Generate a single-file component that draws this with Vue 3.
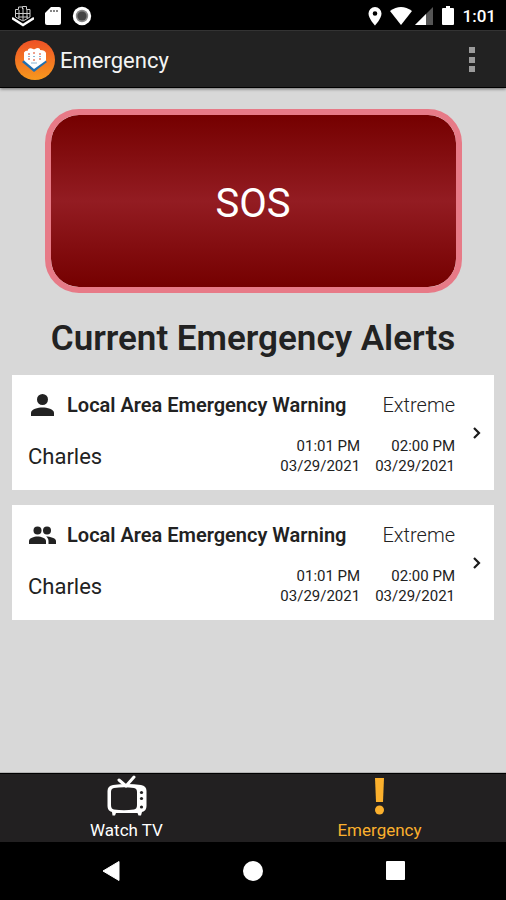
<script setup>
const alerts = [
  { id: 1, group: false, title: 'Local Area Emergency Warning', severity: 'Extreme', sender: 'Charles', start: ['01:01 PM', '03/29/2021'], end: ['02:00 PM', '03/29/2021'] },
  { id: 2, group: true, title: 'Local Area Emergency Warning', severity: 'Extreme', sender: 'Charles', start: ['01:01 PM', '03/29/2021'], end: ['02:00 PM', '03/29/2021'] },
]
</script>

<template>
  <div class="screen">
    <div class="status">
      <div class="status-left">
        <svg width="22" height="22" viewBox="0 0 22 22">
          <path d="M0 13l11 7 11-7" fill="none" stroke="#fff" stroke-width="2.400" />
          <g fill="none" stroke="#ccc" stroke-width="1">
            <path d="M3.500 12V4.500h3V2h4v2-2.500h4v3h3.500V12L11 16z" />
            <path d="M7 5v8M11 3v12M15 5v8M4 8.500h14M6 12h10" />
          </g>
        </svg>
        <svg width="16" height="20" viewBox="0 0 16 20">
          <path d="M6 1h8q2 0 2 2v14q0 2-2 2H2q-2 0-2-2V7z" fill="#fff" />
          <path d="M6 4v2M9 4v2M12 4v2" stroke="#444" stroke-width="1.300" />
        </svg>
        <svg width="20" height="20" viewBox="0 0 20 20">
          <circle cx="10" cy="10" r="9.200" fill="#fff" />
          <circle cx="10" cy="10" r="6.200" fill="#888" />
          <circle cx="10" cy="10" r="4.600" fill="#444" />
        </svg>
      </div>
      <div class="status-right">
        <svg class="pin" width="14" height="20" viewBox="0 0 14 20">
          <path fill-rule="evenodd" d="M7 1a6.500 6.500 0 0 1 6.500 6.500c0 5-6.500 12-6.500 12S.5 12.500.5 7.500A6.500 6.500 0 0 1 7 1zm0 4.200a2.300 2.300 0 1 0 0 4.600 2.300 2.300 0 0 0 0-4.600z" fill="#fff" />
        </svg>
        <svg class="wifi" width="22" height="18" viewBox="0 0 22 18">
          <path d="M0 4Q11-4 22 4L11 18z" fill="#fff" />
        </svg>
        <svg class="signal" width="18" height="18" viewBox="0 0 18 18">
          <path d="M18 0v18H0z" fill="#555" />
          <path d="M11 7v11H0z" fill="#fff" />
        </svg>
        <svg class="battery" width="12" height="20" viewBox="0 0 12 20">
          <path d="M4 0h4v2h3q1 0 1 1v15q0 1-1 1H1q-1 0-1-1V3q0-1 1-1h3z" fill="#fff" />
        </svg>
        <span>1:01</span>
      </div>
    </div>

    <header class="appbar">
      <svg class="logo" width="42" height="42" viewBox="0 0 42 42">
        <defs>
          <linearGradient id="sun" x1="0" y1="0" x2="0" y2="1">
            <stop offset="0" stop-color="#ef5126" />
            <stop offset="1" stop-color="#f7981d" />
          </linearGradient>
        </defs>
        <circle cx="21" cy="21" r="20" fill="url(#sun)" />
        <path d="M8 23l5-4h15l5 4-13 10z" fill="#1f6fb0" />
        <path d="M10 21.500l5-3h12l5 3L20 30z" fill="#fff" />
        <path d="M10 21V13.500q1-2 4-2V10.500q2-2 5-.5 1 .5 2 0 3-2 5 0v1q5 0 6 3v7L21 26z" fill="#fff" />
        <path d="M14 15h2m3-1h2m4 1h2M14 20h2m3 1h2m4-1h2" stroke="#e98168" stroke-width="1.500" />
        <path d="M14 17.500h2m3 0h2m4 0h2M17 24h6" stroke="#87b5d4" stroke-width="1.200" />
      </svg>
      <h1>Emergency</h1>
      <button class="more" type="button" aria-label="More options">
        <svg width="8" height="28" viewBox="0 0 8 28" fill="#9b9b9b">
          <path d="M1 1h6v6H1zM1 11h6v6H1zM1 20h6v6H1z" />
        </svg>
      </button>
    </header>

    <main>
      <button class="sos" type="button">SOS</button>
      <h2>Current Emergency Alerts</h2>
      <ul class="alerts">
        <li v-for="a in alerts" :key="a.id">
          <a class="card" href="#">
            <div class="body">
              <div class="row">
                <svg v-if="!a.group" class="who" width="28" height="28" viewBox="0 0 28 28" fill="#222">
                  <circle cx="14.500" cy="8.500" r="5.500" />
                  <path d="M3 25v-3c0-4 7-5.500 11.500-5.500S26 18 26 22v3z" />
                </svg>
                <svg v-else class="who" width="28" height="28" viewBox="0 0 28 28" fill="#222">
                  <circle cx="9.500" cy="9.500" r="4" />
                  <circle cx="19" cy="9.500" r="4" />
                  <path d="M1 23v-3c0-3 5-4.500 8.500-4.500S18 17 18 20v3z" />
                  <path d="M18 15.500c4 0 10 1.500 10 4.500v3h-7.500v-3c0-2-1-3.500-2.500-4.500z" />
                </svg>
                <strong>{{ a.title }}</strong>
                <span class="severity">{{ a.severity }}</span>
              </div>
              <div class="row details">
                <span class="sender">{{ a.sender }}</span>
                <span class="time">{{ a.start[0] }}<br>{{ a.start[1] }}</span>
                <span class="time">{{ a.end[0] }}<br>{{ a.end[1] }}</span>
              </div>
            </div>
            <svg class="chevron" width="10" height="14" viewBox="0 0 10 14">
              <path d="M2 2l5 5-5 5" fill="none" stroke="#1b1b1b" stroke-width="2.200" />
            </svg>
          </a>
        </li>
      </ul>
    </main>

    <nav class="tabs">
      <a href="#">
        <svg width="42" height="42" viewBox="0 0 42 42">
          <path d="M13 5l7 6L28 2" fill="none" stroke="#fff" stroke-width="3" stroke-linecap="round" stroke-linejoin="round" />
          <path fill-rule="evenodd" fill="#fff" d="M7 10Q21 8 35 10q5.500 1 5.500 6v15q0 5-4.500 6l-1 3.500h-2.500l-1-2.500H10l-1 2.500H6.500l-.5-3.500q-4.500-1-4.500-6V16q0-5 5.500-6zM8 13q-3 .5-3 4v13q0 4 3 4.500 10 1.500 20 0 3-.5 3-4.500V17q0-3.500-3-4-10-1.500-20 0z" />
          <g fill="#222">
            <circle cx="35.500" cy="17.500" r="1.600" />
            <circle cx="35.500" cy="23.500" r="1.600" />
            <circle cx="35.500" cy="32" r="1.600" />
          </g>
        </svg>
        <span>Watch TV</span>
      </a>
      <a class="active" href="#" aria-current="page">
        <svg width="42" height="42" viewBox="0 0 42 42" fill="#fbb02d">
          <path d="M16 3h9l-1 24h-7z" />
          <circle cx="20.500" cy="35" r="4.500" />
        </svg>
        <span>Emergency</span>
      </a>
    </nav>

    <div class="sysnav">
      <button type="button" aria-label="Back">
        <svg width="22" height="22" viewBox="0 0 22 22"><path d="M20 1.500v19L4 11z" fill="#fff" stroke="#fff" stroke-linejoin="round" /></svg>
      </button>
      <button type="button" aria-label="Home">
        <svg width="22" height="22" viewBox="0 0 22 22"><circle cx="11" cy="11" r="10" fill="#fff" /></svg>
      </button>
      <button type="button" aria-label="Recent apps">
        <svg width="22" height="22" viewBox="0 0 22 22"><rect x="1" y="1" width="19" height="19" rx="1" fill="#fff" /></svg>
      </button>
    </div>
  </div>
</template>

<style>
body { margin: 0; background: #000; }
</style>

<style scoped>
.screen {
  min-height: 100vh;
  display: flex;
  flex-direction: column;
  font-family: Roboto, "Liberation Sans", sans-serif;
  color: #222;
  background: #d8d8d8;
}
svg { display: block; flex: none; }
button { font: inherit; border: 0; padding: 0; background: none; cursor: pointer; }
a { color: inherit; text-decoration: none; }
h1, h2, ul { margin: 0; padding: 0; }
.status {
  height: 30px;
  box-sizing: border-box;
  padding: 1px 10px 0 12px;
  display: flex;
  align-items: center;
  justify-content: space-between;
  background: #000;
  color: #fff;
}
.status-left { display: flex; align-items: center; gap: 11px; }
.status-right { display: flex; align-items: center; font-size: 17px; font-weight: 500; }
.pin { margin-right: 8px; }
.wifi { margin-right: 3px; }
.signal { margin-right: 9px; }
.battery { margin-right: 9px; }
.appbar {
  height: 58px;
  box-sizing: border-box;
  padding: 2px 30px 0 14px;
  display: flex;
  align-items: center;
  gap: 4px;
  background: #222;
  color: #f4f4f4;
  border-top: 1px solid #333;
  border-bottom: 1px solid #000;
  box-shadow: 0 1px 3px rgba(0, 0, 0, 0.5);
}
h1 { flex: 1; padding-top: 2px; font-size: 22px; line-height: 28px; font-weight: 400; }
main { flex: 1; padding: 21px 12px; }
.sos {
  display: block;
  width: calc(100% - 65px);
  height: 184px;
  margin: 0 auto;
  padding-top: 4px;
  border: 6px solid #e77a87;
  border-radius: 34px;
  background: linear-gradient(#750000, #931c22 50%, #750000) padding-box;
  color: #fff;
  font-size: 40px;
}
h2 {
  margin: 24px 0 14px;
  font-size: 35px;
  line-height: 44px;
  font-weight: 600;
  text-align: center;
}
.alerts { list-style: none; display: flex; flex-direction: column; gap: 15px; }
.card {
  display: flex;
  align-items: center;
  gap: 17px;
  min-height: 115px;
  box-sizing: border-box;
  padding: 13px 12px 13px 16px;
  background: #fff;
}
.body { flex: 1; }
.row { display: flex; align-items: center; }
.row strong { flex: 1; margin-left: 11px; font-size: 20px; line-height: 32px; font-weight: 600; }
.severity { font-size: 20px; font-weight: 300; }
.details { margin-top: 15px; gap: 15px; }
.sender { flex: 1; font-size: 22px; }
.time { font-size: 15px; line-height: 20px; text-align: right; }
.tabs {
  display: flex;
  height: 68px;
  background: #222021;
  color: #fff;
  box-shadow: 0 -1px 1px #000;
}
.tabs a {
  flex: 1;
  display: flex;
  flex-direction: column;
  align-items: center;
  padding-top: 1px;
  font-size: 17px;
  line-height: 26px;
}
.tabs .active { color: #fbb02d; }
.sysnav {
  display: flex;
  height: 58px;
  align-items: center;
  justify-content: space-between;
  padding: 0 99px;
  background: #000;
}
</style>
